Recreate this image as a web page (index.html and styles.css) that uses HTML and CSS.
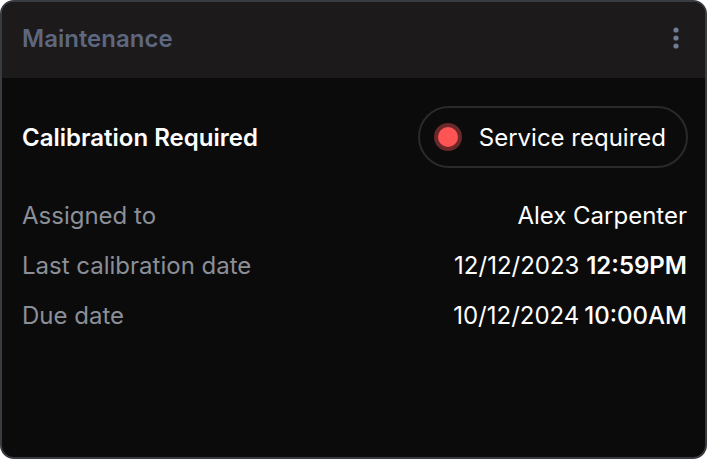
FILE: index.html
```html
<!DOCTYPE html>
<html>
<head>
<meta charset="utf-8">
<link rel="stylesheet" href="styles.css">
</head>
<body>
<div class="card">
  <div class="card-header">
    <span class="card-title">Maintenance</span>
    <button class="kebab" aria-label="More">
      <svg width="8" height="24" viewBox="0 0 8 24"><circle cx="4" cy="4" r="2.6" fill="#6e7c98"/><circle cx="4" cy="12" r="2.6" fill="#6e7c98"/><circle cx="4" cy="20" r="2.6" fill="#6e7c98"/></svg>
    </button>
  </div>
  <div class="card-body">
    <div class="status-row">
      <span class="status-title">Calibration Required</span>
      <span class="pill"><span class="dot"></span>Service required</span>
    </div>
    <div class="info-list">
      <div class="info-row"><span class="label">Assigned to</span><span class="value">Alex Carpenter</span></div>
      <div class="info-row"><span class="label">Last calibration date</span><span class="value">12/12/2023 <b>12:59PM</b></span></div>
      <div class="info-row"><span class="label">Due date</span><span class="value">10/12/2024<b class="tight">10:00AM</b></span></div>
    </div>
  </div>
</div>
</body>
</html>
```
FILE: styles.css
```css
html, body { margin: 0; padding: 0; background: #ffffff; }
body { font-family: Inter, "Noto Sans", sans-serif; }
.card {
  width: 707px; height: 459px; box-sizing: border-box;
  border: 2px solid #383b40; border-radius: 14px;
  background: #0b0b0c; overflow: hidden;
  display: flex; flex-direction: column;
}
.card-header {
  height: 76px; box-sizing: border-box; background: #1c1a1a;
  display: flex; align-items: center; justify-content: space-between;
  padding: 0 19px 0 20px;
}
.card-title { color: #5d6880; font-size: 24px; font-weight: 600; margin-top: -3px; }
.kebab { background: none; border: 0; padding: 0; width: 20px; height: 28px; display: flex; align-items: center; justify-content: center; margin-top: -4px; }
.card-body { padding: 28px 18px 0 20px; }
.status-row { display: flex; align-items: center; justify-content: space-between; }
.status-title { color: #ffffff; font-size: 24px; font-weight: 600; }
.pill {
  display: flex; align-items: center; gap: 17px;
  height: 62px; box-sizing: border-box; padding: 0 20px 0 14px; margin-right: -1px;
  border: 2px solid #2a2a2c; border-radius: 31px;
  color: #ffffff; font-size: 24px;
}
.dot { width: 20px; height: 20px; border-radius: 50%; background: #ff5454; border: 4px solid #6b2829; }
.info-list { margin-top: 22px; display: flex; flex-direction: column; }
.info-row { height: 50px; display: flex; align-items: center; justify-content: space-between; font-size: 24px; }
.label { color: #8b8f98; }
.value { color: #ffffff; }
.value b { font-weight: 600; }
.value b.tight { font-weight: 500; margin-left: 5px; }
```
